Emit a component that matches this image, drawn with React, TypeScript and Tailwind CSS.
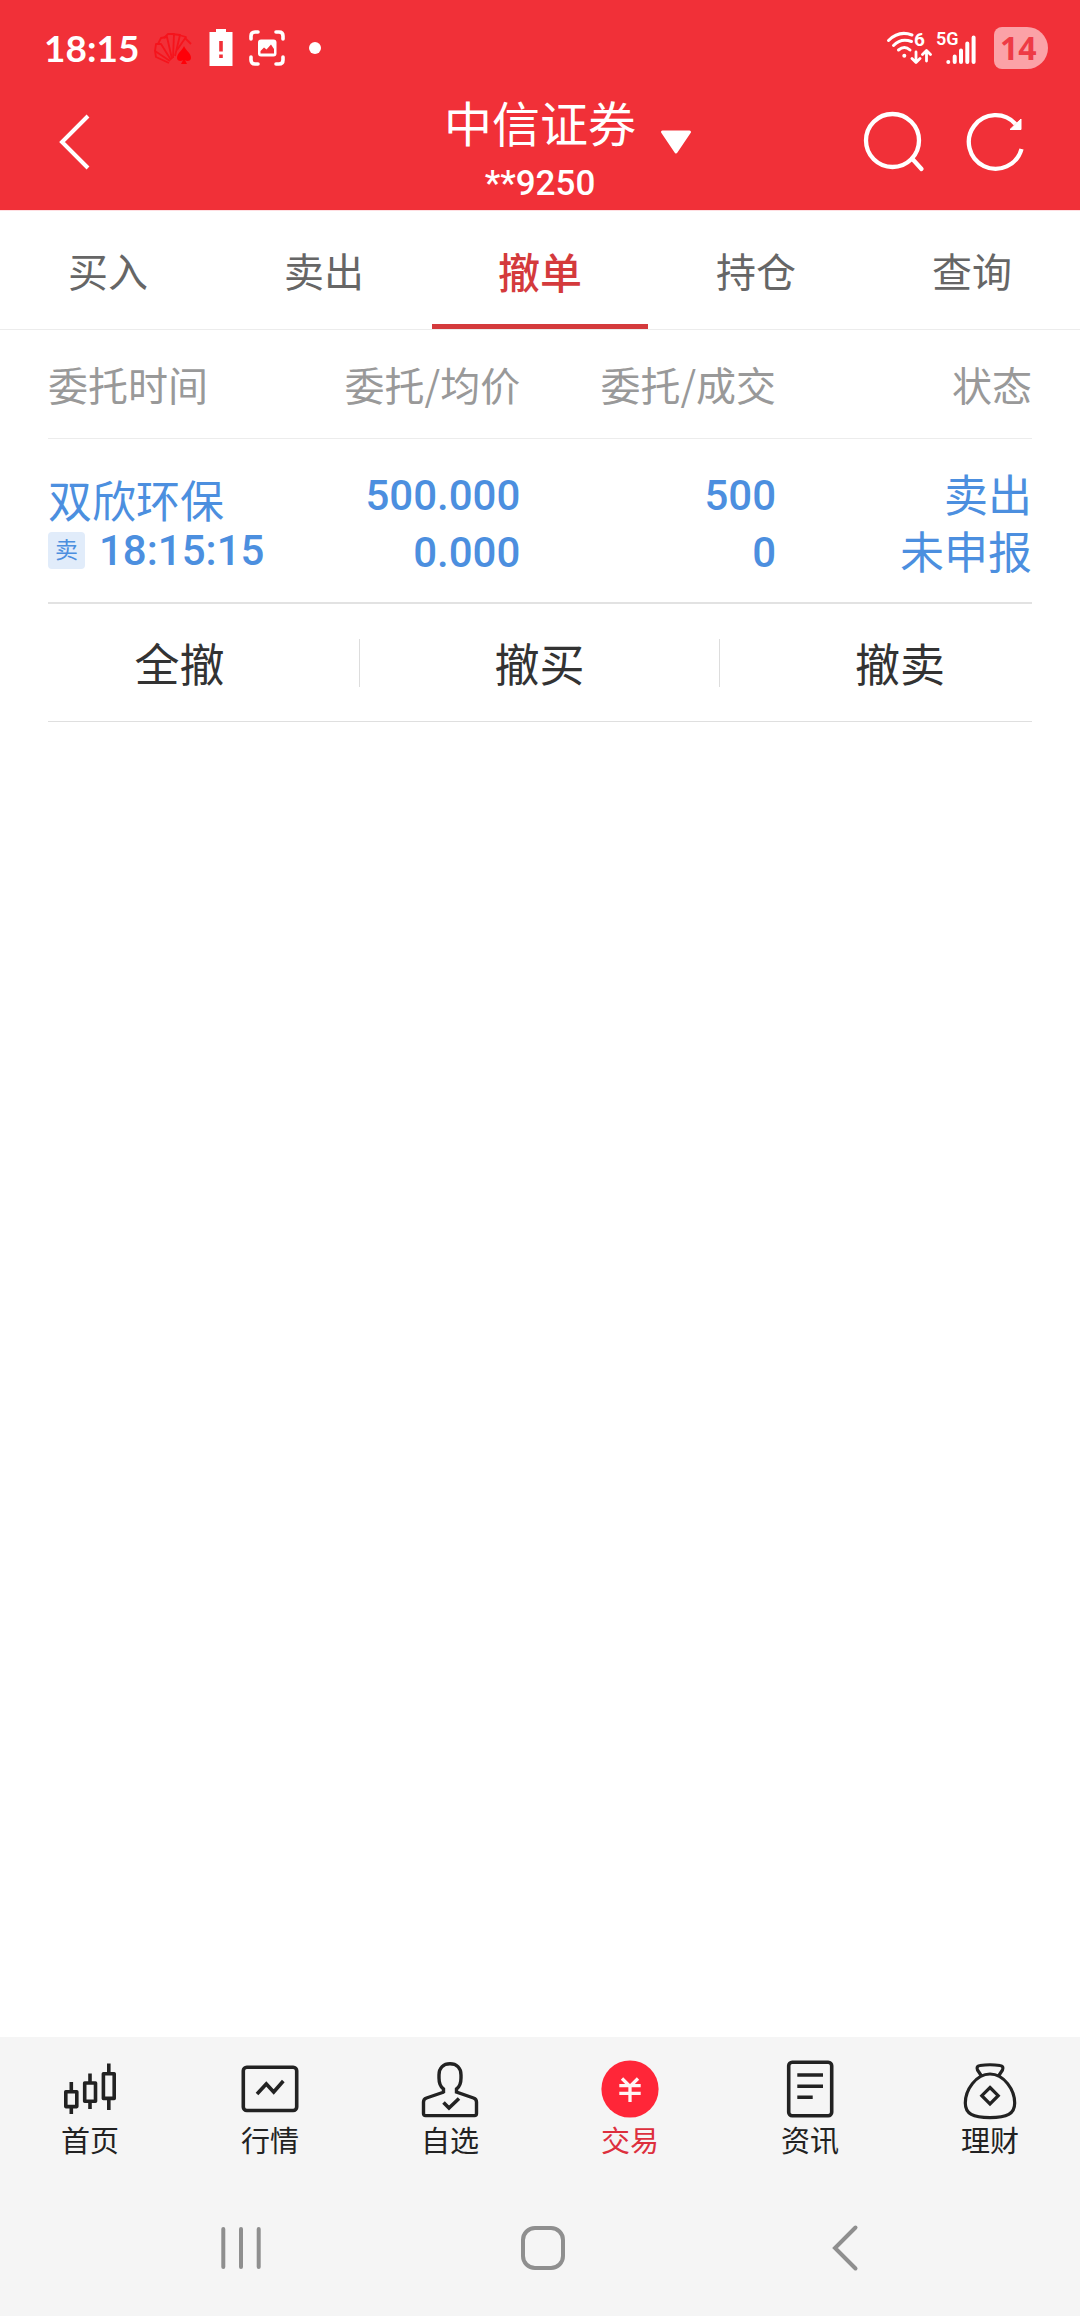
import type { ReactNode } from "react";

const ink = "#222222";

function CardsIcon() {
  return (
    <svg className="h-9 w-10" viewBox="0 0 40 36" fill="none" aria-hidden="true">
      <g stroke="#f5141c" strokeWidth="1.800" strokeLinejoin="round">
        <path d="M16 33L3 27L2 21L17 31" />
        <path d="M2 21L3 14L8 14L18 30" />
        <path d="M5 14L8 8L14 7L19 29" />
        <path d="M11 8L15 4L21 4L20 28" />
        <path d="M19 4L27 5L22 26" />
        <path d="M26 5L33 7L24 20" />
        <path d="M32 8L38 14" />
      </g>
      <path
        d="M31 16C33 21 38 23 38 28C38 31 34 32 32 30L34 34H28L30 30C28 32 24 31 24 28C24 23 29 21 31 16Z"
        fill="#ff0008"
      />
    </svg>
  );
}

function BatteryAlertIcon() {
  return (
    <svg className="h-[38px] w-6" viewBox="0 0 24 38" aria-hidden="true">
      <path d="M7 0H17V3H23.500V37H0.500V3H7Z" fill="#fff" />
      <path d="M10.200 12H13.800V22.500H10.200ZM10.200 25.500H13.800V29H10.200Z" fill="#f13038" />
    </svg>
  );
}

function CaptureIcon() {
  return (
    <svg className="size-9" viewBox="0 0 36 36" fill="none" aria-hidden="true">
      <path
        d="M2 9V6Q2 2 6 2H9M27 2H30Q34 2 34 6V9M34 27V30Q34 34 30 34H27M9 34H6Q2 34 2 30V27"
        stroke="#fff"
        strokeWidth="3.600"
        strokeLinecap="round"
      />
      <rect x="9" y="9.500" width="18.500" height="17" rx="3" fill="#fff" />
      <path d="M11.500 23.500V21L15 17.500L17.500 19.500L22 14.500L25 19V23.500Z" fill="#f13038" />
    </svg>
  );
}

function WifiIcon() {
  return (
    <svg className="h-11 w-[46px]" viewBox="0 -4 46 44" fill="none" stroke="#fff" aria-label="Wi-Fi 6">
      <path d="M2.500 10.500Q13 0 26 5M7.500 15.500Q15 7.500 25.500 11.500M12.500 20Q18.500 15 24 20" strokeWidth="3" strokeLinecap="round" />
      <circle cx="18.300" cy="25.700" r="2" fill="#fff" stroke="none" />
      <path d="M30 22V32M26 28.500L30 32.500L34 28.500M40.500 31V21M36.500 24.500L40.500 20.500L44.500 24.500" strokeWidth="2.800" strokeLinecap="round" strokeLinejoin="round" />
      <text x="28" y="16" fontSize="19" fontWeight="700" fontFamily="Roboto, sans-serif" fill="#fff" stroke="none">
        6
      </text>
    </svg>
  );
}

function SignalIcon() {
  return (
    <svg className="h-11 w-10" viewBox="0 -4 40 44" aria-label="5G">
      <text x="0" y="15" fontSize="18" fontWeight="600" fontFamily="Roboto, sans-serif" fill="#fff">
        5G
      </text>
      <g stroke="#fff" strokeWidth="4" strokeLinecap="round">
        <path d="M12.300 31.900V32M18.700 26.500V32M25 20.500V32M31.300 13.500V32M37.600 7.500V32" />
      </g>
    </svg>
  );
}

function StatusBar() {
  return (
    <div className="flex h-24 items-center pr-8 pl-11">
      <span className="font-['Lato','Noto_Sans',sans-serif] text-[37px] leading-10 font-bold">18:15</span>
      <span className="ml-3.5 flex items-center gap-4">
        <CardsIcon />
        <BatteryAlertIcon />
        <CaptureIcon />
        <i className="ml-2 size-3 rounded-full bg-white" />
      </span>
      <span className="ml-auto flex items-center">
        <WifiIcon />
        <span className="ml-1">
          <SignalIcon />
        </span>
        <span className="ml-[18px] flex h-[42px] w-[54px] items-center rounded-l-lg rounded-r-[21px] bg-[#fba2a7] pl-1.5 font-['Open_Sans','Noto_Sans',sans-serif] text-[32px] leading-none font-bold text-[#ee3b45]">
          14
        </span>
      </span>
    </div>
  );
}

function Header() {
  return (
    <header className="border-b border-[#ffdfe2] bg-[#f13038] text-white">
      <StatusBar />
      <div className="grid h-[114px] grid-cols-[1fr_auto_1fr] items-start">
        <button type="button" aria-label="返回" className="flex h-[92px] items-center pl-[57px]">
          <svg className="h-16 w-9" viewBox="0 0 36 64" fill="none" stroke="#fff" strokeWidth="4" aria-hidden="true">
            <path d="M31 6L5 32L31 58" />
          </svg>
        </button>
        <div className="flex flex-col items-center">
          <h1 className="text-[48px] leading-[50px] font-normal">中信证券</h1>
          <p className="mt-4 font-['Roboto',sans-serif] text-[35px] leading-[44px] font-medium">**9250</p>
        </div>
        <div className="flex h-[92px] items-center pr-[52px]">
          <button type="button" aria-label="切换账户" className="ml-6">
            <svg className="h-7 w-8" viewBox="0 0 32 28" fill="#fff" stroke="#fff" strokeWidth="3" strokeLinejoin="round" aria-hidden="true">
              <path d="M2.500 4H29.500L16 24Z" />
            </svg>
          </button>
          <button type="button" aria-label="搜索" className="ml-auto">
            <svg className="size-16" viewBox="0 0 64 64" fill="none" stroke="#fff" strokeWidth="4.300" strokeLinecap="round" aria-hidden="true">
              <circle cx="30.500" cy="30.500" r="26.500" />
              <path d="M50 48.500L59.500 59" />
            </svg>
          </button>
          <button type="button" aria-label="刷新" className="ml-[38px]">
            <svg className="size-16" viewBox="0 0 64 64" fill="none" stroke="#fff" strokeWidth="4.300" aria-hidden="true">
              <path d="M57.500 39A26.800 26.800 0 1 1 51.500 14" />
              <path d="M57 9V19.500H46Z" fill="#fff" strokeWidth="1" />
            </svg>
          </button>
        </div>
      </div>
    </header>
  );
}

function Tabs() {
  const tabs = ["买入", "卖出", "撤单", "持仓", "查询"];
  return (
    <nav className="grid grid-cols-5 border-b border-[#ececec]">
      {tabs.map((t) =>
        t === "撤单" ? (
          <button key={t} type="button" aria-current="page" className="h-[118px] border-b-[5px] border-[#d43a3c] pt-[5px] text-[42px] font-medium text-[#d43a3c]">
            {t}
          </button>
        ) : (
          <button key={t} type="button" className="h-[118px] text-[40px] text-[#666666]">
            {t}
          </button>
        ),
      )}
    </nav>
  );
}

function Orders() {
  return (
    <table className="w-full table-fixed">
      <thead>
        <tr className="h-[108px] border-b border-[#ececec] text-right text-[40px] text-[#999999]">
          <th className="w-[22%] text-left font-normal whitespace-nowrap">委托时间</th>
          <th className="w-[26%] font-normal">委托/均价</th>
          <th className="w-[26%] font-normal">委托/成交</th>
          <th className="w-[26%] font-normal">状态</th>
        </tr>
      </thead>
      <tbody>
        <tr className="h-[165px] border-b-2 border-[#e2e2e2] text-right align-top text-[44px] text-[#4c8fdf]">
          <td className="pt-[34px] text-left whitespace-nowrap">
            <div className="leading-[52px]">双欣环保</div>
            <div className="flex items-center font-['Roboto',sans-serif] text-[42px] leading-[52px] font-medium">
              <span className="mr-3.5 flex h-[37px] w-[37px] shrink-0 items-center justify-center rounded-sm bg-[#e1ecfa] pb-1 font-['Noto_Sans_CJK_SC',sans-serif] text-[23px] leading-none font-normal">
                卖
              </span>
              18:15:15
            </div>
          </td>
          <td className="pt-7 font-['Roboto',sans-serif] text-[42px] leading-[57px] font-medium">
            <div>500.000</div>
            <div>0.000</div>
          </td>
          <td className="pt-7 font-['Roboto',sans-serif] text-[42px] leading-[57px] font-medium">
            <div>500</div>
            <div>0</div>
          </td>
          <td className="pt-[26px] leading-[57px]">
            <div>卖出</div>
            <div>未申报</div>
          </td>
        </tr>
      </tbody>
    </table>
  );
}

function BulkActions() {
  const actions = ["全撤", "撤买", "撤卖"];
  return (
    <div className="-mx-12 grid h-[117px] grid-cols-3 items-center">
      {actions.map((a) => (
        <button key={a} type="button" className="h-[48px] border-r border-[#dddddd] text-[45px] leading-[48px] text-[#333333] last:border-r-0">
          {a}
        </button>
      ))}
    </div>
  );
}

function NavIcon({ children }: { children: ReactNode }) {
  return (
    <svg className="h-16 w-[60px]" viewBox="0 0 60 64" fill="none" stroke={ink} strokeWidth="3.600" aria-hidden="true">
      {children}
    </svg>
  );
}

const navItems: { label: string; icon: ReactNode; active?: boolean }[] = [
  {
    label: "首页",
    icon: (
      <g strokeLinejoin="round">
        <rect x="5.800" y="33.800" width="11" height="14.800" />
        <path d="M11.300 24V33M11.300 50V56" />
        <rect x="24.700" y="25" width="10.800" height="18.200" />
        <path d="M30 15.500V24M30 44V51" />
        <rect x="43.400" y="15.800" width="10.800" height="24.600" />
        <path d="M48.800 5.500V15M48.800 41V52" />
      </g>
    ),
  },
  {
    label: "行情",
    icon: (
      <>
        <rect x="3.300" y="9.300" width="53.400" height="43.200" rx="3.500" />
        <path d="M17 36L26.300 26L33.700 34L43.300 23" />
      </>
    ),
  },
  {
    label: "自选",
    icon: (
      <>
        <path
          d="M23.500 35V31C20 28.500 19 25 19 20V17C19 10 23.500 5.800 30 5.800S41 10 41 17V20C41 25 40 28.500 36.500 31V34L53.500 40Q56.500 41 56.500 44V55.500Q56.500 57.600 54.500 57.600H5.500Q3.500 57.600 3.500 55.500V44Q3.500 41 6.500 40L24 34"
          strokeWidth="3.400"
        />
        <path d="M23.500 44.500L29 50L39 40.500" />
      </>
    ),
  },
  {
    label: "交易",
    active: true,
    icon: (
      <>
        <circle cx="30" cy="31" r="28.600" fill="#ff2638" stroke="none" />
        <path d="M22 20.500L30 28.500L38 20.500M19.300 27.700H40.700M19.300 35.300H40.700M30 28V44" stroke="#fff5f5" strokeWidth="3.300" />
      </>
    ),
  },
  {
    label: "资讯",
    icon: (
      <>
        <rect x="8.700" y="4.300" width="43" height="53.400" rx="3.500" />
        <path d="M17.300 17H43M17.300 28.300H43M17.300 39.300H32.700" />
      </>
    ),
  },
  {
    label: "理财",
    icon: (
      <g strokeWidth="3.200" strokeLinejoin="round">
        <path d="M21.500 18L17.500 12Q16 8 20 7.500Q30 6 40 7.500Q44 8 42.500 12L38.500 18" />
        <path d="M30 16C16 16 5.300 32 5.300 45C5.300 56 13 59.600 30 59.600S54.700 56 54.700 45C54.700 32 44 16 30 16Z" />
        <path d="M30 29.500L38.200 37.700L30 45.900L21.800 37.700Z" strokeLinejoin="miter" />
      </g>
    ),
  },
];

function BottomNav() {
  return (
    <nav className="grid grid-cols-6 pt-[21px]">
      {navItems.map((n) => (
        <a
          key={n.label}
          href="#"
          aria-current={n.active ? "page" : undefined}
          className="flex flex-col items-center text-[29px] leading-[34px] text-[#222222] aria-[current=page]:text-[#dd2f3d]"
        >
          <NavIcon>{n.icon}</NavIcon>
          {n.label}
        </a>
      ))}
    </nav>
  );
}

function SystemNav() {
  return (
    <div className="grid h-[160px] grid-cols-3 items-center pt-6 pr-[84px] pl-[90px] *:flex *:justify-center">
      <button type="button" aria-label="最近任务">
        <svg className="size-16" viewBox="0 0 64 64" stroke="#8f8f8f" strokeWidth="4" strokeLinecap="round" aria-hidden="true">
          <path d="M14.300 13V51M32 13V51M49.700 13V51" />
        </svg>
      </button>
      <button type="button" aria-label="主屏幕">
        <svg className="size-16" viewBox="0 0 64 64" fill="none" stroke="#8f8f8f" strokeWidth="4" aria-hidden="true">
          <rect x="12" y="12" width="40" height="40" rx="12" />
        </svg>
      </button>
      <button type="button" aria-label="系统返回">
        <svg className="size-16" viewBox="0 0 64 64" fill="none" stroke="#8f8f8f" strokeWidth="4" strokeLinecap="round" aria-hidden="true">
          <path d="M42.500 11.500L22 32L42.500 52.500" />
        </svg>
      </button>
    </div>
  );
}

export default function App() {
  return (
    <div className="flex min-h-screen flex-col bg-white font-['Noto_Sans_CJK_SC',sans-serif]">
      <Header />
      <Tabs />
      <main className="mx-12 flex-1">
        <Orders />
        <BulkActions />
        <hr className="border-[#dfdfdf]" />
      </main>
      <footer className="bg-[#f5f5f5]">
        <BottomNav />
        <SystemNav />
      </footer>
    </div>
  );
}
